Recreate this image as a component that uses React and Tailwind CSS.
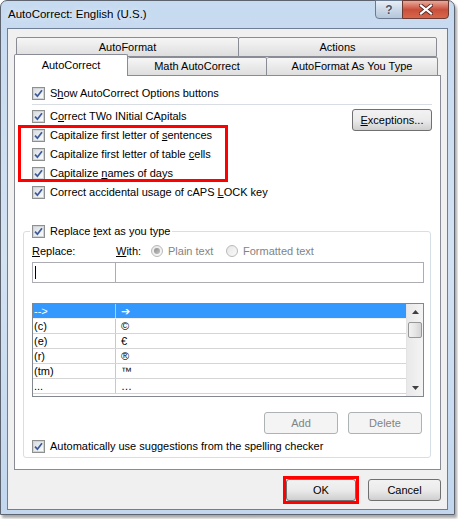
import React from 'react'

function Check() {
  return (
    <span className="w-[13px] h-[13px] border border-[#8e8f8f] bg-white flex items-center justify-center shrink-0">
      <span className="w-[11px] h-[11px] border border-[#d0d3d8] bg-gradient-to-br from-[#dadde2] to-[#fafbfc] flex items-center justify-center">
        <svg width="9" height="9" viewBox="0 0 9 9">
          <path d="M1 4.6 L3.4 7.2 L8 1.2" stroke="#3c5a9a" strokeWidth="1.7" fill="none" />
        </svg>
      </span>
    </span>
  )
}

function CheckRow({ children }) {
  return (
    <div className="h-[19px] flex items-center gap-[5px]">
      <Check />
      <span>{children}</span>
    </div>
  )
}

function Radio({ checked }) {
  return (
    <span className="w-[12px] h-[12px] rounded-full border border-[#b9b9b9] bg-gradient-to-br from-[#e6e6e6] to-[#fafafa] flex items-center justify-center shrink-0">
      {checked && <span className="w-[6px] h-[6px] rounded-full bg-gradient-to-br from-[#8d8d8d] to-[#c4c4c4]" />}
    </span>
  )
}

function Btn({ children, disabled, className = '' }) {
  const base = disabled
    ? 'border-[#adb2b5] bg-[#f4f4f4] text-[#838383]'
    : 'border-[#707070] bg-gradient-to-b from-[#f2f2f2] via-[#ebebeb] to-[#cfcfcf] text-black'
  return (
    <div className={`h-[22px] rounded-[3px] border flex items-center justify-center ${base} ${className}`}>
      {children}
    </div>
  )
}

const rows = [
  ['-->', '➔'],
  ['(c)', '©'],
  ['(e)', '€'],
  ['(r)', '®'],
  ['(tm)', '™'],
  ['...', '…'],
]

export default function App() {
  return (
    <div className="w-[458px] h-[519px] bg-white overflow-hidden font-['Liberation_Sans',Arial,sans-serif] text-[11px] text-black leading-none">
      <div className="w-[455px] h-[515px] rounded-t-[7px] border border-[#5d6470] bg-gradient-to-b from-[#c6daf0] via-[#d3e2f3] to-[#c2d7ee] flex flex-col shadow-[2px_3px_3px_rgba(0,0,0,0.35)]">
        {/* title bar */}
        <div className="h-[27px] flex items-center">
          <span className="pl-[7px] text-[11.5px] [text-shadow:0_0_6px_#ffffff]">AutoCorrect: English (U.S.)</span>
          <div className="ml-auto mr-[5px] self-start -mt-px flex h-[19px]">
            <div className="w-[28px] rounded-bl-[4px] border border-[#6b7a8f] bg-gradient-to-b from-[#e8eef6] via-[#cbd8e8] to-[#b5c7dc] flex items-center justify-center text-[12px] font-bold text-[#4b5563] [text-shadow:0_0_2px_#ffffff]">?</div>
            <div className="w-[47px] -ml-px rounded-br-[4px] border border-[#6b3a33] bg-gradient-to-b from-[#e9a99b] via-[#c9503c] to-[#d8664a] flex items-center justify-center">
              <svg width="14" height="11" viewBox="0 0 14 11">
                <path d="M2 1.5 L12 9.5 M12 1.5 L2 9.5" stroke="#5a2a24" strokeWidth="4" strokeLinecap="square" />
                <path d="M2 1.5 L12 9.5 M12 1.5 L2 9.5" stroke="#ffffff" strokeWidth="2.2" strokeLinecap="square" />
              </svg>
            </div>
          </div>
        </div>

        {/* client */}
        <div className="mx-[6px] mb-[4px] flex-1 border border-[#6e7f95] bg-[#f0f0f0] flex flex-col px-[6px] pt-[8px]">
          {/* tabs */}
          <div className="flex ml-[2px] w-[422px] h-[20px]">
            <div className="w-[223px] border border-[#898c95] rounded-t-[2px] bg-gradient-to-b from-[#f6f6f6] to-[#dedede] flex items-center justify-center">AutoFormat</div>
            <div className="w-[199px] -ml-px border border-[#898c95] rounded-t-[2px] bg-gradient-to-b from-[#f6f6f6] to-[#dedede] flex items-center justify-center">Actions</div>
          </div>
          <div className="flex h-[19px] -mb-px">
            <div className="relative z-10 w-[114px] -mt-[3px] h-[22px] border border-b-0 border-[#898c95] rounded-t-[2px] bg-white flex items-center justify-center">AutoCorrect</div>
            <div className="w-[139px] border border-l-0 border-[#898c95] rounded-t-[2px] bg-gradient-to-b from-[#f6f6f6] to-[#dedede] flex items-center justify-center">Math AutoCorrect</div>
            <div className="w-[171px] border border-l-0 border-[#898c95] rounded-t-[2px] bg-gradient-to-b from-[#f6f6f6] to-[#dedede] flex items-center justify-center">AutoFormat As You Type</div>
          </div>

          {/* panel */}
          <div className="border border-[#898c95] bg-white px-[8px] pt-[8px] pb-[11px]">
            <div className="pl-[9px]">
              <CheckRow>S<u>h</u>ow AutoCorrect Options buttons</CheckRow>
              <div className="h-px bg-[#d8dde4] mt-px mb-[2px]" />
              <div className="flex items-start">
                <CheckRow>C<u>o</u>rrect TWo INitial CApitals</CheckRow>
                <Btn className="ml-auto mt-[2px] -mb-[5px] w-[80px]"><span><u>E</u>xceptions...</span></Btn>
              </div>
              <div className="relative">
                <CheckRow>Capitalize first letter of <u>s</u>entences</CheckRow>
                <CheckRow>Capitalize first letter of table <u>c</u>ells</CheckRow>
                <CheckRow>Capitalize <u>n</u>ames of days</CheckRow>
                <div className="absolute -left-[14px] -top-px w-[210px] h-[57px] border-[3px] border-[#ff0000]" />
              </div>
              <CheckRow>Correct accidental usage of cAPS <u>L</u>OCK key</CheckRow>
            </div>

            <fieldset className="mt-[21px] mr-px border border-[#d5dfe5] rounded-[3px] pl-[8px] pr-[6px] pb-[3px]">
              <legend className="-ml-[2px] px-[2px]">
                <div className="h-[16px] flex items-center gap-[5px]">
                  <Check />
                  <span>Replace <u>t</u>ext as you type</span>
                </div>
              </legend>
              <div className="mt-[4px] h-[16px] flex items-center">
                <span className="w-[84px]"><u>R</u>eplace:</span>
                <span className="w-[35px]"><u>W</u>ith:</span>
                <Radio checked />
                <span className="ml-[5px] w-[58px] text-[#838383]">Plain text</span>
                <Radio />
                <span className="ml-[5px] text-[#838383]">Formatted text</span>
              </div>
              <div className="mt-[3px] h-[21px] flex border border-[#abadb3]">
                <div className="w-[83px] border-r border-[#abadb3] flex items-center pl-[2px]">
                  <span className="w-px h-[13px] bg-black" />
                </div>
                <div className="flex-1" />
              </div>
              <div className="mt-[20px] h-[94px] border border-[#828790] flex">
                <div className="flex-1 flex flex-col">
                  {rows.map((r, i) => (
                    <div
                      key={i}
                      className={`h-[15px] flex border-b ${i === 0 ? 'bg-[#3399ff] text-white border-[#f0f0f0]' : 'border-[#d5d5d5]'}`}
                    >
                      <div className={`w-[83px] border-r pl-[1px] flex items-center ${i === 0 ? 'border-[#a9d0ff]' : 'border-[#c8c8c8]'}`}>{r[0]}</div>
                      <div className="pl-[5px] flex items-center">{r[1]}</div>
                    </div>
                  ))}
                </div>
                <div className="w-[17px] bg-gradient-to-r from-[#e9e9e9] to-[#f4f4f4] border-l border-[#e3e3e3] flex flex-col items-center">
                  <svg className="mt-[6px]" width="7" height="4" viewBox="0 0 7 4"><path d="M0 4 L3.5 0 L7 4 Z" fill="#404040" /></svg>
                  <div className="mt-[8px] w-[14px] h-[16px] rounded-[2px] border border-[#979797] bg-gradient-to-r from-[#f2f2f2] via-[#e6e6e6] to-[#d4d4d4]" />
                  <svg className="mt-auto mb-[6px]" width="7" height="4" viewBox="0 0 7 4"><path d="M0 0 L3.5 4 L7 0 Z" fill="#404040" /></svg>
                </div>
              </div>
              <div className="mt-[15px] flex justify-end gap-[10px] pr-[2px]">
                <Btn disabled className="w-[74px]">Add</Btn>
                <Btn disabled className="w-[74px]">Delete</Btn>
              </div>
              <div className="mt-[4px] h-[16px] flex items-center gap-[5px]">
                <Check />
                <span>Automatically use suggestions from the spelling checker</span>
              </div>
            </fieldset>
          </div>

          {/* dialog buttons */}
          <div className="mt-[9px] flex justify-end gap-[12px]">
            <div className="relative">
              <Btn className="w-[70px] border-[#3c7fb1]">OK</Btn>
              <div className="absolute -left-[3px] -top-[3px] -right-[3px] -bottom-[3px] border-[3px] border-[#ff0000]" />
            </div>
            <Btn className="w-[73px]">Cancel</Btn>
          </div>
        </div>
      </div>
    </div>
  )
}
